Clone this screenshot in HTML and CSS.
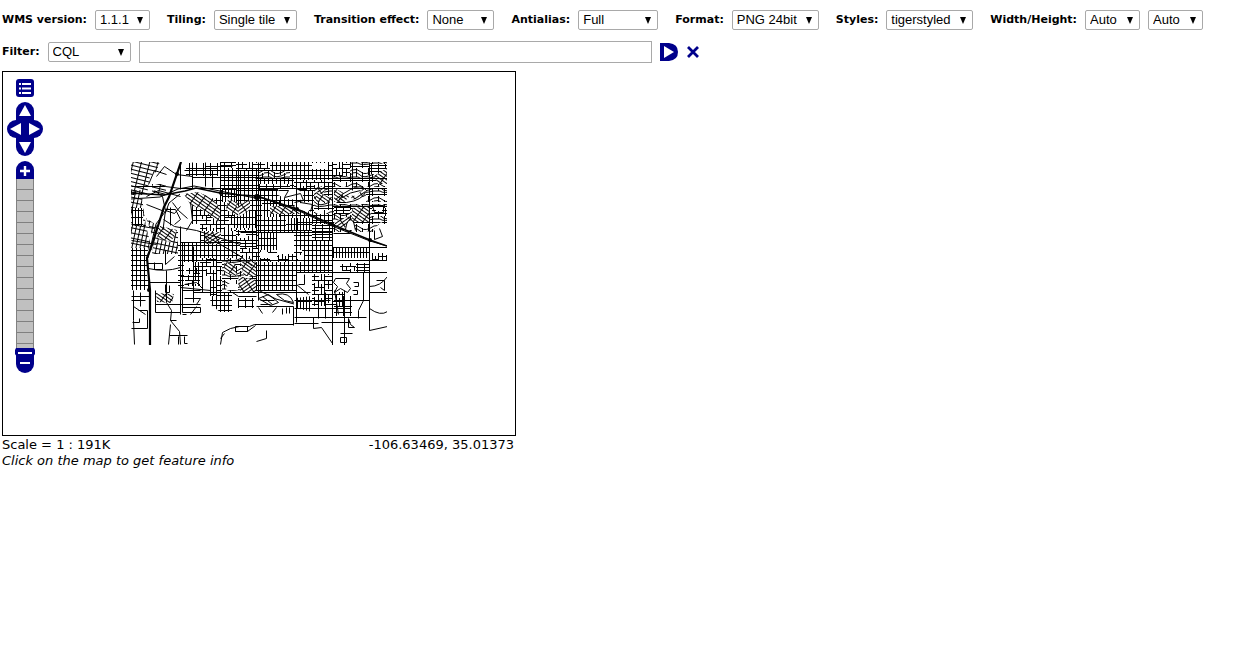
FILE: index.html
```html
<!DOCTYPE html>
<html lang="en">
<head>
<meta charset="utf-8">
<title>Map preview</title>
<link rel="stylesheet" href="styles.css">
</head>
<body>
<form class="toolbar">
  <div class="row options">
    <div class="field"><label for="version">WMS version:</label><select id="version" class="w-xs"><option>1.1.1</option></select></div>
    <div class="field"><label for="tiling">Tiling:</label><select id="tiling" class="w-l"><option>Single tile</option></select></div>
    <div class="field"><label for="transition">Transition effect:</label><select id="transition" class="w-s"><option>None</option></select></div>
    <div class="field"><label for="antialias">Antialias:</label><select id="antialias" class="w-m"><option>Full</option></select></div>
    <div class="field"><label for="format">Format:</label><select id="format" class="w-xl"><option>PNG 24bit</option></select></div>
    <div class="field"><label for="styles">Styles:</label><select id="styles" class="w-xl"><option>tigerstyled</option></select></div>
    <div class="field"><label for="width">Width/Height:</label><select id="width" class="w-xs"><option>Auto</option></select><select id="height" class="w-xs" aria-label="Height"><option>Auto</option></select></div>
  </div>
  <div class="row filter">
    <div class="field"><label for="filterType">Filter:</label><select id="filterType" class="w-l"><option>CQL</option></select></div>
    <input type="text" class="query" aria-label="Filter expression">
    <button type="button" class="icon" aria-label="Apply filter"><svg width="18" height="18" viewBox="0 0 18 18"><path fill="#00008b" d="M0 0H9Q18 1 18 9T9 18H0Z"/><path fill="#fff" d="M4 3L14 9L4 15Z"/></svg></button>
    <button type="button" class="icon" aria-label="Reset filter"><svg width="14" height="14" viewBox="0 0 14 14"><path d="M2 2L12 12M12 2L2 12" stroke="#00008b" stroke-width="2.8"/></svg></button>
  </div>
</form>

<main class="viewer">
  <div class="map">
    <svg class="tiles" width="256" height="183" viewBox="131 162 256 183" role="img" aria-label="Street map">
      <defs>
        <pattern id="grid" width="4" height="5" patternUnits="userSpaceOnUse"><rect class="ground" width="4" height="5"/><path class="p" d="M.5 0V5M0 .5H4"/></pattern>
        <pattern id="rows" width="7" height="3" patternUnits="userSpaceOnUse"><rect class="ground" width="7" height="3"/><path class="p" d="M.5 0V3M0 .5H7"/></pattern>
        <pattern id="cols" width="3" height="7" patternUnits="userSpaceOnUse"><rect class="ground" width="3" height="7"/><path class="p" d="M.5 0V7M0 .5H3"/></pattern>
        <pattern id="loose" width="7" height="6" patternUnits="userSpaceOnUse"><path class="p" d="M.5 0V6M0 .5H7"/></pattern>
        <pattern id="broken" width="18" height="14" patternUnits="userSpaceOnUse"><rect class="ground" width="18" height="14"/><path class="p" d="M.5 0V14M0 .5H18M4.5 0V9M8.5 3V14M12.5 0V7M15.5 4V14M0 4.5H9M8 7.5H18M0 10.5H13"/></pattern>
        <pattern id="tilt" width="4" height="5" patternUnits="userSpaceOnUse" patternTransform="rotate(12)"><path class="p" d="M.5 0V5M0 .5H4"/></pattern>
        <pattern id="town" width="8" height="4" patternUnits="userSpaceOnUse" patternTransform="rotate(14)"><path class="p" d="M.5 0V4M0 .5H8"/></pattern>
        <pattern id="diagA" width="8" height="3" patternUnits="userSpaceOnUse" patternTransform="rotate(35)"><rect class="ground" width="8" height="3"/><path class="p" d="M.5 0V3M0 .5H8"/></pattern>
        <pattern id="diagB" width="8" height="3" patternUnits="userSpaceOnUse" patternTransform="rotate(-35)"><rect class="ground" width="8" height="3"/><path class="p" d="M.5 0V3M0 .5H8"/></pattern>
        <pattern id="curves" width="22" height="14" patternUnits="userSpaceOnUse"><rect class="ground" width="22" height="14"/><path class="p" d="M0 2Q5 0 9 4T22 2M0 5Q5 3 8 7T22 6M0 9H6Q9 12 22 9M0 12.5H22M4.5 0V9M10.5 4V14M16.5 0V7M20.5 5V14"/></pattern>
      </defs>

      <!-- west side -->
      <path fill="url(#town)" d="M131 162H160L156 172L150 176L147 195H131ZM152 184H166V195H152Z"/>
      <path fill="url(#tilt)" d="M131 190H141L146 226L152 250H131ZM146 218L158 226L178 232V254H152L154 240Z"/>
      <path fill="url(#cols)" d="M132 208H143V226H132Z"/>
      <path fill="url(#grid)" d="M131 248H148L147 276L150 290H131ZM178 242H184V290H178Z"/>
      <path fill="url(#diagA)" d="M160 226L177 230L171 242L157 238Z"/>

      <!-- main street grid -->
      <path fill="url(#grid)" d="M220 162H332V262H184V242H200V224H192V198H220V188Z"/>
      <path fill="url(#grid)" d="M256 260H296V291H256ZM212 276H232V312H220L210 304ZM296 230H332V272H296Z"/>
      <path fill="url(#rows)" d="M220 162H250V168H220ZM312 224H332V240H312ZM258 184H290V190H258ZM240 240H256V252H240Z"/>
      <path fill="url(#cols)" d="M222 188H236V202H222ZM234 210H256V228H234ZM262 201H280V217H262ZM286 218H312V230H286ZM258 232H276V250H258ZM194 262H200V276H194Z"/>
      <path fill="url(#broken)" d="M236 162H270V170H236ZM200 216H234V231H200ZM240 248H258V262H240ZM258 250H302V262H258ZM294 180H332V190H294ZM200 258H222V276H200Z"/>

      <!-- suburbs -->
      <path fill="url(#curves)" d="M258 170H290V178H258ZM332 162H387V187H332ZM314 188H332V214H314ZM332 204H387V232H332ZM366 188H387V202H366ZM222 258H256V292H222Z"/>
      <path fill="url(#diagA)" d="M184 194L198 192L212 198L222 210L218 222L206 212L190 204ZM228 198L240 204L238 216L226 210ZM270 206L294 206L300 214H270Z"/>
      <path fill="url(#diagB)" d="M236 204L250 200V210L240 216ZM205 232H221V244H205ZM238 276L256 280V292H240ZM314 188L324 186V200H314Z"/>
      <path fill="url(#diagA)" d="M224 262L236 264V276L224 272ZM240 262H256V276H244ZM352 208L370 206V222H352ZM316 192L332 198V202H316Z"/>
      <path fill="url(#rows)" d="M334 206H350V214H334ZM369 164H387V174H369ZM372 208H387V216H372ZM236 230H256V236H236ZM350 263H369V272H350Z"/>
      <path fill="url(#diagA)" d="M334 188L350 196L344 202H334ZM374 176L387 168V184H378Z"/>
      <path fill="url(#diagB)" d="M350 192L364 188L366 196L352 200ZM334 222L350 216V226L338 229Z"/>
      <path fill="url(#cols)" d="M333 247H369V258H333ZM296 298L312 296V312L296 308ZM210 276H216V296H210Z"/>
      <path fill="url(#broken)" d="M332 162H350V176H332ZM372 253H387V261H372ZM340 264H356V271H340ZM185 275H202V286H185ZM312 274H332V292H312ZM312 292H344V306H312Z"/>
      <path fill="url(#diagA)" d="M156 293L174 294L172 303L157 302Z"/>
      <path fill="url(#loose)" d="M186 163H218V176H186ZM334 296H352V316H334ZM238 298H254V308H238ZM186 268H200V274H186Z"/>

      <!-- open land -->
      <path class="ground" d="M277 232H294V254H277ZM333 234L347 233L372 244L366 246H333ZM312 163H328V169H312ZM278 189Q288 184 302 192L304 200L287 199L278 195ZM294 204L309 202L312 206L308 212L296 209ZM344 190Q355 187 362 190L356 196L343 195ZM346 226Q350 214 355 226V230H346ZM376 205H382V211H376ZM260 252H268V258H260ZM270 253H277V260H270ZM298 255H304V260H298ZM228 284H238V290H226ZM200 276H210V292H200ZM373 230L381 222L387 226V238H376ZM202 190L222 191L220 194H202ZM240 232H246V238H240Z"/>

      <!-- minor streets -->
      <g class="street" transform="translate(.5 .5)">
        <path d="M131 186H165L180 188H387M180 162V189M192 162V188M205 162V186M220 162V232M238 162V206M258 162V300M296 162V322M332 162V338M369 162V330M184 170H228M192 177H258M205 166H232M212 170V187M228 176V188"/>
        <path d="M255 170H332M255 178H387M332 206H387M296 222H333M180 242H240M240 232H332M332 247H387M180 260H387M333 233L350 233M296 272H387M193 292H310M131 224L154 228M131 240L156 244M352 162V190"/>
        <path d="M165 209H175L180 219L174 224M170 207V225M172 202L178 210L187 218M190 202L192 220L186 230M163 219L174 226L196 230L240 244M154 190L162 196L165 210L174 213L180 206M146 196L158 190L180 196M146 204L164 211M156 176L164 166L176 174L192 176M148 184L154 170L166 174"/>
        <path d="M147 263H162V269H154V262M165 250V264L174 256M148 268Q164 272 180 267M148 282H180M165 284V292H169V285M180 226V314M182 242V312M193 246V302M202 262V292M180 276H202V288L196 282L184 284M182 290H200M184 298H200L196 304H184M182 307H200V312H182M155 290V312H180M155 304H200M190 314L196 306M182 314H186M180 287L210 290V292M166 270V302L171 310L170 320L179 331L180 344"/>
        <path d="M133 290V320L134 344M140 292V306M131 300H145M131 296H150M138 310H147V328H131M132 322H139V318M133 306L145 314M170 320H176M168 344L170 324M169 335H187M178 336V344M184 336V343H187"/>
        <path d="M220 344L222 332L230 328L239 326H249L254 324H293M235 331H247L255 325M235 326H247V331H235ZM220 338L224 333M256 306H293V325M266 330V338L256 341M258 307L262 313M272 312L276 307M282 308V314M286 307V313M289 307V313M232 292L238 296H256"/>
        <path d="M294 300H330M294 308H350M294 317H366M294 323H318M313 317V328L321 327L332 343M321 322H350M332 310V345M344 290V345M348 318V327H354L350 324ZM340 342H346V337H340ZM340 333H352M318 295V318M325 292V318M340 300H369M334 290L338 314M363 272V300L358 310V318M369 330L387 326M369 308Q380 316 387 311M369 292H387M369 286Q380 286 387 276M376 280H384V290L380 287M304 274V284H298M296 284L308 294"/>
        <path d="M335 278H349L346 283L350 288L347 292L340 288L334 292L337 286L333 282ZM353 282H358V286H354M352 290H357V294H353M276 294Q289 291 293 302L284 300ZM258 298L268 294L278 302L270 305ZM260 300H274M262 296L272 304M260 304H270"/>
        <path d="M278 190L288 190L284 197L300 193L303 200L294 202M300 202L312 204L310 211M335 199Q342 193 350 189Q361 183 366 190Q362 200 346 202L336 202M340 198Q350 191 360 190M374 230V239L382 236L379 228M345 229Q347 215 353 221L355 230M372 205H383V212H374Z"/>
      </g>

      <!-- railways and freeways -->
      <path class="road" d="M131 199L160 197L178 189L194 186L220 191L255 198L262 198L299 211L332 226L370 241L387 246"/>
      <path class="highway" d="M131 193L164 195L185 191L196 188L220 193L240 195L257 196L297 209L331 224L370 240L387 246"/>
      <path class="road" d="M163 230L165 214L169 203L180 194M168 208L156 224L148 258M206 236L240 256L252 266M258 290L276 299L294 304"/>
      <path class="freeway" d="M181 162L169 197L164 207L152 245L147 258L150 290V345"/>
      <circle cx="177" cy="174" r="2"/><circle cx="221" cy="193" r="2"/><circle cx="257" cy="197" r="3"/><circle cx="297" cy="209" r="2"/><circle cx="332" cy="224" r="2"/><circle cx="370" cy="240" r="2"/><circle cx="149" cy="290" r="2"/>
    </svg>

    <div class="controls">
      <button type="button" class="icon" aria-label="Options"><svg width="18" height="18" viewBox="0 0 18 18"><rect width="18" height="18" rx="3" fill="#00008b"/><path d="M3 5H5M6 5H15M3 9.5H5M6 9.5H15M3 14H5M6 14H15" stroke="#fff" stroke-width="2"/></svg></button>
      <div class="pan">
        <button type="button" class="icon up" aria-label="Pan north"><svg width="18" height="18" viewBox="0 0 18 18"><path fill="#00008b" d="M0 18V9A9 9 0 0 1 18 9V18Z"/><path fill="#fff" d="M9 3L15 14H3Z"/></svg></button>
        <button type="button" class="icon" aria-label="Pan west"><svg width="18" height="18" viewBox="0 0 18 18"><path fill="#00008b" d="M18 0H9A9 9 0 0 0 9 18H18Z"/><path fill="#fff" d="M3 9L14 3V15Z"/></svg></button>
        <button type="button" class="icon" aria-label="Pan east"><svg width="18" height="18" viewBox="0 0 18 18"><path fill="#00008b" d="M0 0H9A9 9 0 0 1 9 18H0Z"/><path fill="#fff" d="M15 9L4 3V15Z"/></svg></button>
        <button type="button" class="icon down" aria-label="Pan south"><svg width="18" height="18" viewBox="0 0 18 18"><path fill="#00008b" d="M0 0V9A9 9 0 0 0 18 9V0Z"/><path fill="#fff" d="M9 15L15 4H3Z"/></svg></button>
      </div>
      <div class="zoom">
        <button type="button" class="icon" aria-label="Zoom in"><svg width="18" height="18" viewBox="0 0 18 18"><path fill="#00008b" d="M0 18V9A9 9 0 0 1 18 9V18Z"/><path d="M9 5V15M4 10H14" stroke="#fff" stroke-width="2.4"/></svg></button>
        <div class="track"></div>
        <button type="button" class="icon" aria-label="Zoom out"><svg width="20" height="25" viewBox="0 0 20 25"><path fill="#00008b" d="M1 7V16A9 9 0 0 0 19 16V7Z"/><path fill="#00008b" d="M1 0H19L20 2V6L18 9H2L0 6V2Z"/><path d="M3 5H17M5 15H15" stroke="#fff" stroke-width="2"/></svg></button>
      </div>
    </div>
  </div>
  <div class="status"><span>Scale = 1 : 191K</span><span>-106.63469, 35.01373</span></div>
  <em class="hint">Click on the map to get feature info</em>
</main>
</body>
</html>
```
FILE: styles.css
```css
* { box-sizing: border-box; }

body {
  margin: 0;
  padding: 10px 2px;
  background: #fff;
  color: #000;
  font: 13px/16px Verdana, "DejaVu Sans", sans-serif;
}

.row { display: flex; align-items: center; }
.options { gap: 17px; }
.filter { gap: 8px; margin: 11px 0 8px; }
.field { display: flex; align-items: center; gap: 8px; white-space: nowrap; }

label { font-size: 11px; font-weight: bold; }

select {
  appearance: none;
  height: 20px;
  padding: 0 0 0 4px;
  border: 1px solid #a9a9a9;
  border-radius: 2px;
  color: #000;
  font: 13px/18px "Liberation Sans", Arial, sans-serif;
  background: #fff url("data:image/svg+xml,%3Csvg xmlns='http://www.w3.org/2000/svg' width='6' height='7'%3E%3Cpath d='M0 0H6L3 7Z'/%3E%3C/svg%3E") no-repeat right 6px center;
}
.w-xs { width: 55px; }
.w-s { width: 67px; }
.w-m { width: 80px; }
.w-l { width: 83px; }
.w-xl { width: 87px; }

.query {
  width: 513px;
  height: 22px;
  border: 1px solid #a9a9a9;
  font: 13px "Liberation Sans", Arial, sans-serif;
}

.icon {
  display: block;
  padding: 0;
  border: 0;
  background: none;
  cursor: pointer;
}
.icon svg { display: block; }

.viewer { width: 514px; max-width: 100%; }

.map {
  position: relative;
  display: flex;
  justify-content: center;
  padding: 90px 0;
  border: 1px solid #000;
}

.controls {
  position: absolute;
  top: 7px;
  left: 4px;
  display: flex;
  flex-direction: column;
  align-items: center;
  gap: 5px;
}

.pan {
  display: grid;
  grid-template-columns: 18px 18px;
  grid-template-rows: 18px 18px 18px;
  justify-items: center;
}
.up, .down { grid-column: 1 / 3; }

.zoom { display: flex; flex-direction: column; align-items: center; }
.track {
  width: 18px;
  height: 169px;
  border: solid #808080;
  border-width: 0 1px;
  background: repeating-linear-gradient(#c0c0c0 0 10px, #808080 10px 11px);
}

.ground { fill: #fff; }
.p { fill: none; stroke: #000; stroke-width: 1; }
.street { fill: none; stroke: #000; stroke-width: 1; }
.road { fill: none; stroke: #000; stroke-width: 1; }
.highway { fill: none; stroke: #000; stroke-width: 1.5; }
.freeway { fill: none; stroke: #000; stroke-width: 2.2; }

.status { display: flex; justify-content: space-between; padding: 1px 2px 0 0; }
.hint { display: block; }
```
